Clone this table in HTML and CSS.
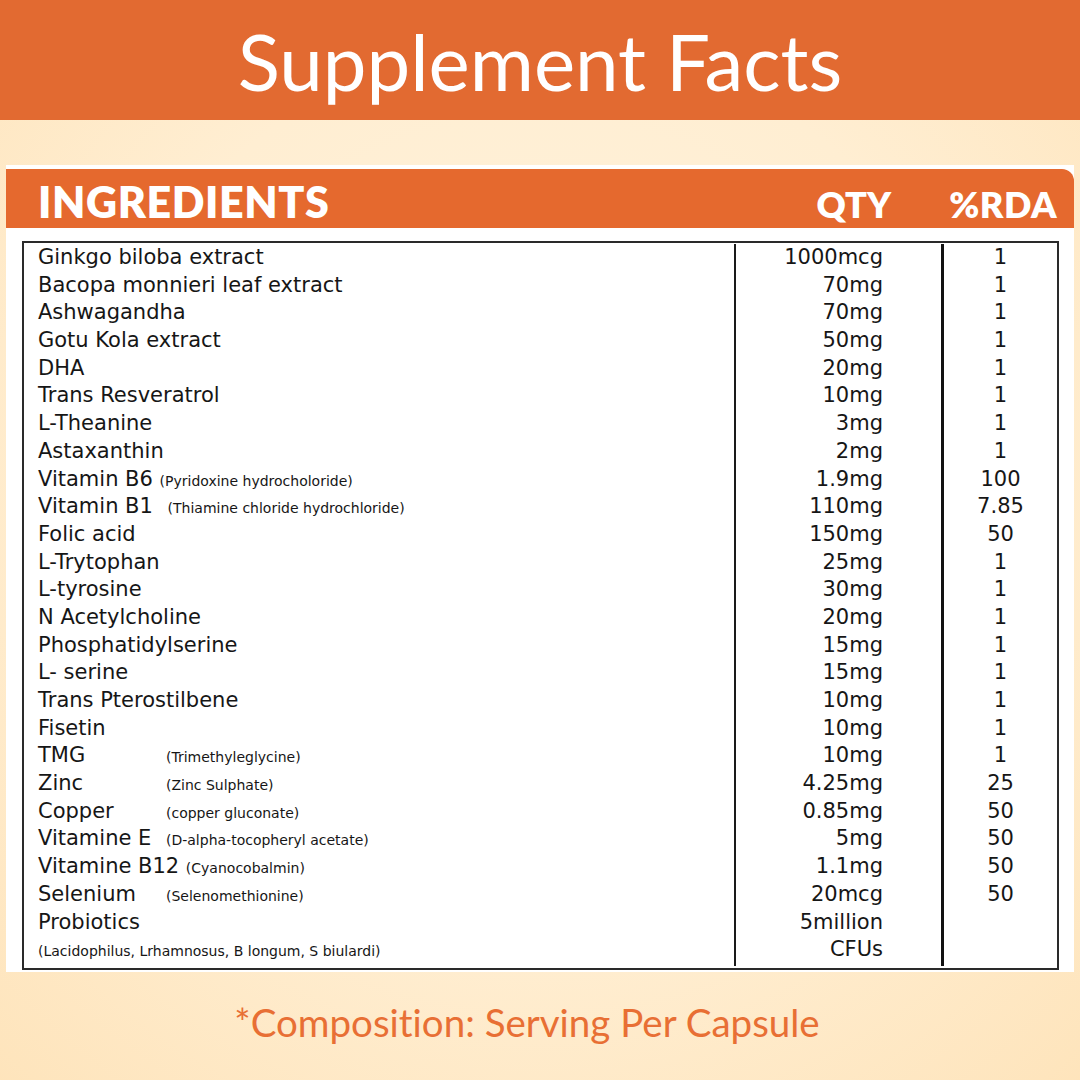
FILE: index.html
```html
<!DOCTYPE html>
<html>
<head>
<meta charset="utf-8">
<link rel="stylesheet" href="styles.css">
</head>
<body>
<div class="page">
  <header class="topbar"><h1 class="title">Supplement Facts</h1></header>
  <section class="panel">
    <div class="panel-head">
      <span class="h-ing">INGREDIENTS</span>
      <span class="h-qty">QTY</span>
      <span class="h-rda">%RDA</span>
    </div>
    <div class="facts">
      <div class="row"><div class="c-name">Ginkgo biloba extract</div><div class="c-qty">1000mcg</div><div class="c-rda">1</div></div>
      <div class="row"><div class="c-name">Bacopa monnieri leaf extract</div><div class="c-qty">70mg</div><div class="c-rda">1</div></div>
      <div class="row"><div class="c-name">Ashwagandha</div><div class="c-qty">70mg</div><div class="c-rda">1</div></div>
      <div class="row"><div class="c-name">Gotu Kola extract</div><div class="c-qty">50mg</div><div class="c-rda">1</div></div>
      <div class="row"><div class="c-name">DHA</div><div class="c-qty">20mg</div><div class="c-rda">1</div></div>
      <div class="row"><div class="c-name">Trans Resveratrol</div><div class="c-qty">10mg</div><div class="c-rda">1</div></div>
      <div class="row"><div class="c-name">L-Theanine</div><div class="c-qty">3mg</div><div class="c-rda">1</div></div>
      <div class="row"><div class="c-name">Astaxanthin</div><div class="c-qty">2mg</div><div class="c-rda">1</div></div>
      <div class="row"><div class="c-name">Vitamin B6 <small class="sub">(Pyridoxine hydrocholoride)</small></div><div class="c-qty">1.9mg</div><div class="c-rda">100</div></div>
      <div class="row"><div class="c-name">Vitamin B1 <small class="sub sub-gap">(Thiamine chloride hydrochloride)</small></div><div class="c-qty">110mg</div><div class="c-rda">7.85</div></div>
      <div class="row"><div class="c-name">Folic acid</div><div class="c-qty">150mg</div><div class="c-rda">50</div></div>
      <div class="row"><div class="c-name">L-Trytophan</div><div class="c-qty">25mg</div><div class="c-rda">1</div></div>
      <div class="row"><div class="c-name">L-tyrosine</div><div class="c-qty">30mg</div><div class="c-rda">1</div></div>
      <div class="row"><div class="c-name">N Acetylcholine</div><div class="c-qty">20mg</div><div class="c-rda">1</div></div>
      <div class="row"><div class="c-name">Phosphatidylserine</div><div class="c-qty">15mg</div><div class="c-rda">1</div></div>
      <div class="row"><div class="c-name">L- serine</div><div class="c-qty">15mg</div><div class="c-rda">1</div></div>
      <div class="row"><div class="c-name">Trans Pterostilbene</div><div class="c-qty">10mg</div><div class="c-rda">1</div></div>
      <div class="row"><div class="c-name">Fisetin</div><div class="c-qty">10mg</div><div class="c-rda">1</div></div>
      <div class="row"><div class="c-name"><span class="nm">TMG</span><small class="sub">(Trimethyleglycine)</small></div><div class="c-qty">10mg</div><div class="c-rda">1</div></div>
      <div class="row"><div class="c-name"><span class="nm">Zinc</span><small class="sub">(Zinc Sulphate)</small></div><div class="c-qty">4.25mg</div><div class="c-rda">25</div></div>
      <div class="row"><div class="c-name"><span class="nm">Copper</span><small class="sub">(copper gluconate)</small></div><div class="c-qty">0.85mg</div><div class="c-rda">50</div></div>
      <div class="row"><div class="c-name">Vitamine E <small class="sub sub-gap">(D-alpha-tocopheryl acetate)</small></div><div class="c-qty">5mg</div><div class="c-rda">50</div></div>
      <div class="row"><div class="c-name">Vitamine B12 <small class="sub">(Cyanocobalmin)</small></div><div class="c-qty">1.1mg</div><div class="c-rda">50</div></div>
      <div class="row"><div class="c-name"><span class="nm">Selenium</span><small class="sub">(Selenomethionine)</small></div><div class="c-qty">20mcg</div><div class="c-rda">50</div></div>
      <div class="row"><div class="c-name">Probiotics</div><div class="c-qty">5million</div><div class="c-rda"></div></div>
      <div class="row row-last"><div class="c-name"><small class="strains">(Lacidophilus, Lrhamnosus, B longum, S biulardi)</small></div><div class="c-qty">CFUs</div><div class="c-rda"></div></div>
    </div>
  </section>
  <p class="note">*Composition: Serving Per Capsule</p>
</div>
</body>
</html>
```

FILE: styles.css
```css
html, body {
  margin: 0;
  padding: 0;
}
body {
  width: 1080px;
  height: 1080px;
  overflow: hidden;
  background: radial-gradient(ellipse 75% 75% at 50% 45%, #fff3de 0%, #ffeed2 55%, #fee4bb 100%);
  font-family: "DejaVu Sans", "Open Sans", sans-serif;
}
.page {
  width: 1080px;
  height: 1080px;
  display: flex;
  flex-direction: column;
}
.topbar {
  height: 120px;
  background: #e26a31;
  display: flex;
  align-items: center;
  justify-content: center;
}
.title {
  margin: 0;
  font-family: "Lato", sans-serif;
  font-weight: 400;
  font-size: 78px;
  color: #ffffff;
  line-height: 1;
  padding-top: 2px;
  font-variant-ligatures: none;
}
.panel {
  margin: 45px 6px 0 6px;
  width: 1068px;
  background: #ffffff;
  padding: 4px 0 2px 0;
}
.panel-head {
  height: 59px;
  background: #e5692e;
  border-top-right-radius: 12px;
  display: flex;
  align-items: baseline;
  color: #ffffff;
  font-family: "Lato", sans-serif;
  font-weight: 800;
  padding-top: 7px;
  box-sizing: border-box;
}
.h-ing {
  margin-left: 32px;
  flex: 1;
  font-size: 43px;
  letter-spacing: 0.6px;
}
.h-qty {
  font-size: 36px;
  margin-right: 58px;
}
.h-rda {
  font-size: 36px;
  margin-right: 17px;
  letter-spacing: 0.5px;
}
.facts {
  margin: 13px 0 0 16px;
  width: 1037px;
  box-sizing: border-box;
  border: 2px solid #2a2a2a;
  padding: 1px 0 4px 0;
  color: #161616;
  font-size: 21px;
}
.row {
  display: grid;
  grid-template-columns: 710px 207px 1fr;
  height: 27.7px;
  line-height: 27.7px;
}
.c-name {
  padding-left: 14px;
  white-space: nowrap;
}
.c-qty {
  border-left: 2px solid #1a1a1a;
  text-align: right;
  padding-right: 58px;
}
.c-rda {
  border-left: 3px solid #111111;
  text-align: center;
}
.sub {
  font-size: 14px;
  margin-left: 0;
}
.sub-gap {
  margin-left: 8px;
}
.nm {
  display: inline-block;
  min-width: 128px;
}
.strains {
  font-size: 14px;
}
.note {
  margin: 27px 26px 0 0;
  text-align: center;
  font-family: "Lato", sans-serif;
  font-size: 38.5px;
  color: #e86f34;
  font-variant-ligatures: none;
}
```
